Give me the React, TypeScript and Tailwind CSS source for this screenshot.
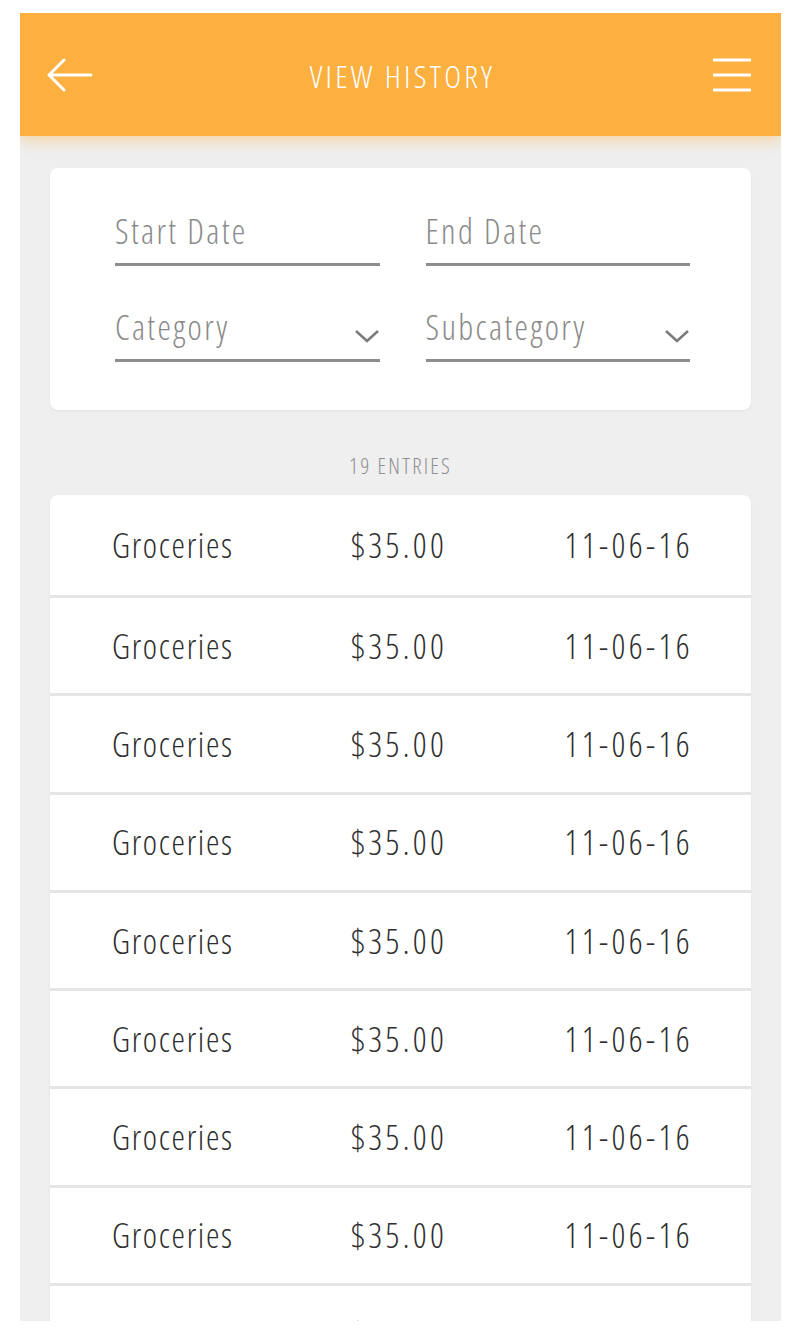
const entries = Array.from({ length: 19 }, (_, i) => ({
  id: i,
  category: "Groceries",
  amount: "$35.00",
  date: "11-06-16",
}));

const font = { fontFamily: '"Open Sans", "Liberation Sans", sans-serif' };

const Chevron = () => (
  <svg width="26" height="16" viewBox="0 0 26 16">
    <path d="M2 3 L13 13 L24 3" fill="none" stroke="#7a7a7a" strokeWidth="2.5" />
  </svg>
);

const Field = ({ label, select }: { label: string; select?: boolean }) => (
  <div className="flex h-[66px] items-end justify-between border-b-[3px] border-[#8d8d8d] pb-[15px]">
    <span className="text-[34px] font-light leading-none tracking-[0.07em] font-stretch-condensed text-[#8a8a8a]">{label}</span>
    {select ? <Chevron /> : null}
  </div>
);

export default function App() {
  return (
    <div className="min-h-[1336px] bg-white pt-[13px]" style={font}>
      <div className="mx-[20px] flex h-[1308px] flex-col overflow-hidden bg-[#efefef]">
        {/* header */}
        <div className="relative z-10 flex h-[123px] shrink-0 items-center justify-between bg-[#fbb040] pl-[27px] pr-[29px] shadow-[0_4px_14px_rgba(251,176,64,0.45)]">
          <svg width="46" height="36" viewBox="0 0 46 36">
            <path d="M44 18 H3 M17 3 L2 18 L17 33" fill="none" stroke="white" strokeWidth="3" strokeLinecap="round" strokeLinejoin="round" />
          </svg>
          <h1 className="mt-[2px] text-[32px] font-light leading-none tracking-[0.1em] font-stretch-condensed text-white">VIEW HISTORY</h1>
          <svg width="40" height="34" viewBox="0 0 40 34">
            <path d="M1 2 H39 M1 17 H39 M1 32 H39" stroke="white" strokeWidth="3" />
          </svg>
        </div>

        {/* filters */}
        <div className="mx-[30px] mt-[32px] rounded-lg bg-white pb-[48px] pl-[65px] pr-[61px] pt-[32px] shadow-[0_1px_3px_rgba(0,0,0,0.06)]">
          <div className="grid grid-cols-2 gap-x-[46px] gap-y-[30px]">
            <Field label="Start Date" />
            <Field label="End Date" />
            <Field label="Category" select />
            <Field label="Subcategory" select />
          </div>
        </div>

        <div className="mt-[44px] mb-[19px] text-center text-[22px] font-light leading-none tracking-[0.1em] font-stretch-condensed text-[#8f8f8f]">
          {entries.length} ENTRIES
        </div>

        {/* list */}
        <div className="mx-[30px] rounded-t-lg bg-white shadow-[0_1px_3px_rgba(0,0,0,0.06)]">
          {entries.map((e, i) => (
            <div
              key={e.id}
              className={
                "flex items-center justify-between border-b-[3px] border-[#e5e5e5] pl-[62px] pr-[61px] text-[34px] font-light leading-none font-stretch-condensed text-[#2e2e2e] " +
                (i === 0 ? "h-[103px]" : "h-[98.3px]")
              }
            >
              <span className="tracking-[0.05em]">{e.category}</span>
              <span className="tracking-[0.1em]">{e.amount}</span>
              <span className="mr-[-3px] tracking-[0.1em]">{e.date}</span>
            </div>
          ))}
        </div>
      </div>
    </div>
  );
}
